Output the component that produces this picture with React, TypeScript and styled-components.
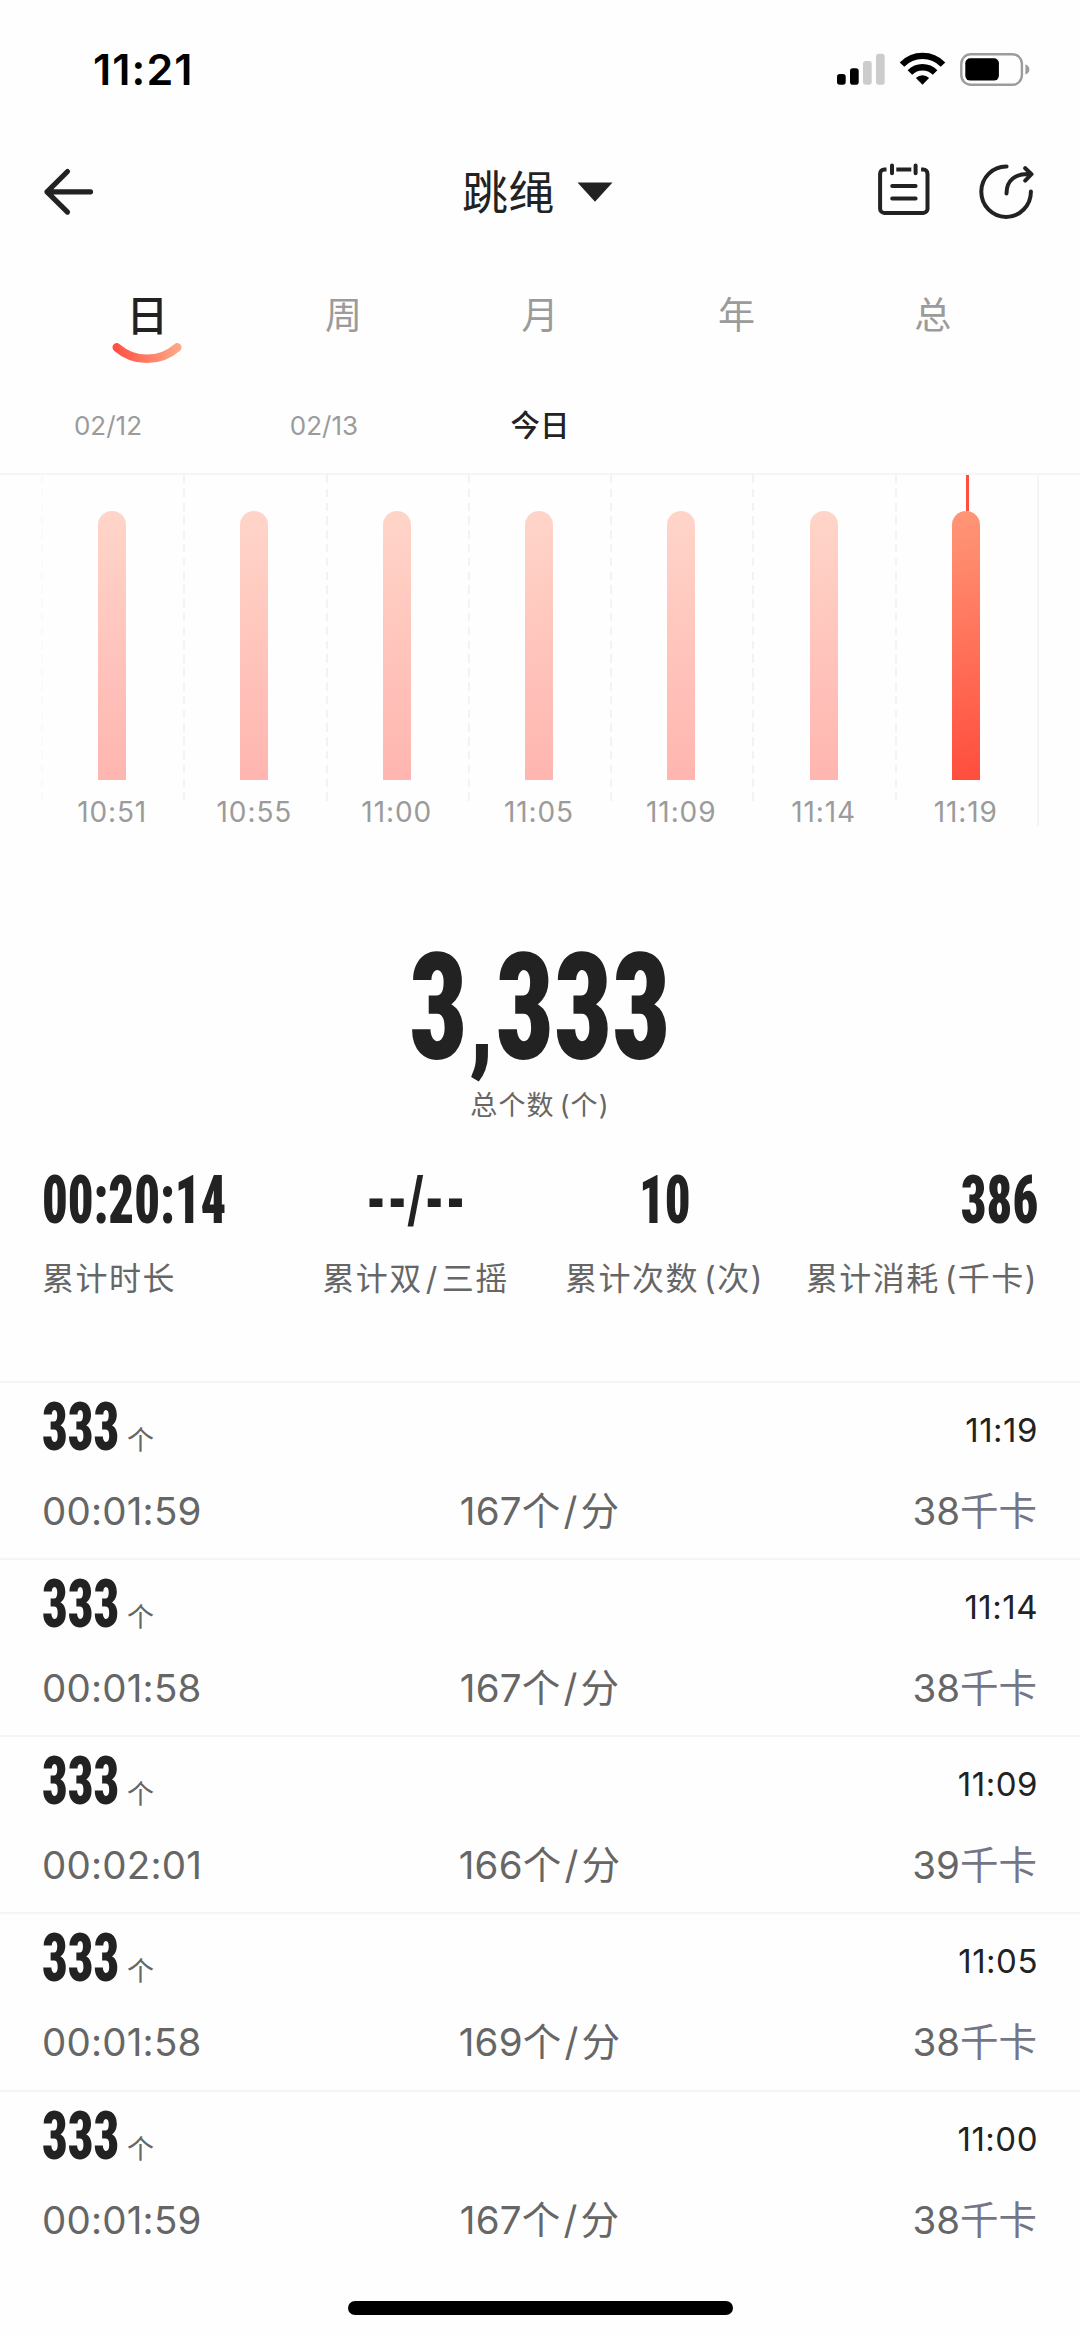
import React from "react";
import styled, { createGlobalStyle } from "styled-components";

const INK = "#222222";
const GRAY = "#666666";
const MUTED = "#9b9b9b";
const LINE = "#f5f5f5";

const Global = createGlobalStyle`
  * { box-sizing: border-box; }
  body { margin: 0; background: #fefefe; }
`;

const Screen = styled.main`
  display: flex;
  flex-direction: column;
  width: 1080px;
  height: 2337px;
  overflow: hidden;
  background: #fefefe;
  color: ${INK};
  font-family: Inter, "Noto Sans CJK SC", sans-serif;
  white-space: nowrap;
`;

/* ---------- status bar ---------- */
const StatusBar = styled.header`
  flex: none;
  display: flex;
  align-items: center;
  justify-content: space-between;
  height: 137px;
  padding: 0 50px 0 93px;
`;
const Clock = styled.span`
  font-size: 43px;
  font-weight: 600;
  line-height: 50px;
  letter-spacing: 1.1px;
  color: #000;
`;
const StatusIcons = styled.svg`
  display: block;
  width: 194px;
  height: 36px;
`;

/* ---------- navigation ---------- */
const NavBar = styled.nav`
  flex: none;
  display: grid;
  grid-template-columns: 1fr auto 1fr;
  align-items: center;
  height: 110px;
  padding: 0 46px 0 41px;
`;
const BackIcon = styled.svg`
  width: 56px;
  height: 52px;
`;
const Title = styled.h1`
  display: flex;
  align-items: center;
  gap: 22px;
  margin: 0;
  font-size: 46px;
  font-weight: 400;
  line-height: 60px;
  letter-spacing: 0.5px;
`;
const Caret = styled.svg`
  width: 36px;
  height: 20px;
`;
const Actions = styled.div`
  display: flex;
  justify-content: flex-end;
  gap: 46px;
`;
const ActionIcon = styled.svg`
  width: 56px;
  height: 58px;
`;

/* ---------- period tabs ---------- */
const Tabs = styled.div`
  flex: none;
  display: flex;
  height: 128px;
  padding: 29px 49px 0;
`;
const Tab = styled.div<{ $active?: boolean }>`
  flex: 1;
  display: flex;
  flex-direction: column;
  align-items: center;
  font-size: ${(p) => (p.$active ? 42 : 37)}px;
  font-weight: ${(p) => (p.$active ? 500 : 400)};
  line-height: 80px;
  color: ${(p) => (p.$active ? INK : MUTED)};
`;
const Smile = styled.svg`
  width: 70px;
  height: 22px;
  margin-top: -14px;
`;

/* ---------- dates ---------- */
const Dates = styled.div`
  flex: none;
  display: flex;
  align-items: center;
  height: 100px;
  padding-top: 4px;
  border-bottom: 2px solid ${LINE};
`;
const DateItem = styled.div<{ $active?: boolean }>`
  width: 216px;
  margin-top: ${(p) => (p.$active ? -2 : 0)}px;
  text-align: center;
  font-size: ${(p) => (p.$active ? 29.5 : 26)}px;
  font-weight: ${(p) => (p.$active ? 500 : 400)};
  line-height: 40px;
  color: ${(p) => (p.$active ? INK : MUTED)};
`;

/* ---------- chart ---------- */
const Chart = styled.section`
  flex: none;
  display: flex;
  height: 351px;
  margin: 0 41px;
  border-right: 2px solid ${LINE};
`;
const Column = styled.div<{ $line: string }>`
  flex: 1;
  display: flex;
  flex-direction: column;
  align-items: center;
  background: repeating-linear-gradient(${(p) => p.$line} 0 8.5px, transparent 8.5px 13.8px) 0 0 / 2px 327px no-repeat;
`;
const Marker = styled.div<{ $on?: boolean }>`
  flex: none;
  width: 3px;
  height: 36px;
  margin-left: 3px;
  background: ${(p) => (p.$on ? "#ff4f40" : "transparent")};
`;
const Bar = styled.div<{ $on?: boolean }>`
  flex: none;
  width: 28px;
  height: 269px;
  border-radius: 14px 14px 0 0;
  background: ${(p) =>
    p.$on
      ? "linear-gradient(170deg, #ff9777, #ff4d3d)"
      : "linear-gradient(170deg, #ffd5c9, #ffb5b0)"};
`;
const BarLabel = styled.div`
  margin-top: 12px;
  font-size: 28px;
  line-height: 40px;
  letter-spacing: 0.9px;
  color: ${MUTED};
`;

/* ---------- summary ---------- */
const Summary = styled.section`
  flex: none;
  display: flex;
  flex-direction: column;
  align-items: center;
  height: 555px;
  padding: 108px 42px 0;
`;
const Figure = styled.div<{ $size: number; $origin?: string }>`
  font-family: "Roboto Condensed", Roboto, sans-serif;
  font-size: ${(p) => p.$size}px;
  font-weight: 900;
  line-height: 1;
  transform: scaleX(0.765);
  transform-origin: ${(p) => p.$origin || "center"};
`;
const Comma = styled.span`
  display: inline-block;
  width: 37px;
  font-size: 0.8em;
  line-height: 1;
  text-align: center;
`;
const Caption = styled.div`
  margin-top: 3px;
  font-size: 27px;
  line-height: 40px;
  letter-spacing: 1.1px;
  color: ${GRAY};
`;
const Stats = styled.div`
  display: flex;
  align-self: stretch;
  margin-top: 45px;
`;
const Stat = styled.div<{ $align: string }>`
  flex: 1 1 0;
  min-width: 0;
  display: flex;
  flex-direction: column;
  align-items: ${(p) => p.$align};
`;
const StatValue = styled.div`
  display: flex;
  align-items: center;
  height: 60px;
`;
const StatLabel = styled.div`
  margin-top: 28px;
  font-size: 32px;
  line-height: 40px;
  letter-spacing: 1.5px;
  color: ${GRAY};
`;
const Slash = styled.span`
  margin: 0 3px;
`;
const Paren = styled.span`
  margin-left: 5px;
`;

/* ---------- records ---------- */
const Record = styled.article`
  flex: none;
  height: 177.15px;
  padding: 15px 43px 0 42px;
  border-top: 2px solid ${LINE};
`;
const RecordTop = styled.div`
  display: flex;
  align-items: center;
  justify-content: space-between;
  height: 60px;
`;
const Count = styled.div`
  display: flex;
  align-items: baseline;
`;
const CountBox = styled.div`
  width: 85px;
`;
const Unit = styled.span`
  font-size: 27px;
  line-height: 30px;
  color: ${GRAY};
`;
const Time = styled.div`
  padding-top: 4px;
  margin-right: -1px;
  font-size: 33px;
  line-height: 40px;
  letter-spacing: 0.5px;
`;
const RecordBottom = styled.div`
  display: grid;
  grid-template-columns: 1fr auto 1fr;
  margin-top: 28px;
  font-size: 38.5px;
  line-height: 50px;
  color: ${GRAY};
`;
const Duration = styled.span`
  letter-spacing: 0.2px;
`;
const Pace = styled.span`
  letter-spacing: 0.2px;
`;
const Energy = styled.span`
  text-align: right;
`;
const EnergyUnit = styled.span`
  color: #757585;
`;

const HomeIndicator = styled.div`
  flex: none;
  width: 385px;
  height: 14px;
  margin: auto auto 22px 348px;
  border-radius: 7px;
  background: #000;
`;

const times = ["10:51", "10:55", "11:00", "11:05", "11:09", "11:14", "11:19"];
const tabs = ["日", "周", "月", "年", "总"];
const stats = [
  { value: "00:20:14", label: "累计时长", align: "flex-start", origin: "left" },
  { value: "--/--", label: <>累计双<Slash>/</Slash>三摇</>, align: "center", origin: "center" },
  { value: "10", label: <>累计次数<Paren>(次)</Paren></>, align: "center", origin: "center" },
  { value: "386", label: <>累计消耗<Paren>(千卡)</Paren></>, align: "flex-end", origin: "right" },
];
const records = [
  { time: "11:19", duration: "00:01:59", pace: 167, kcal: 38 },
  { time: "11:14", duration: "00:01:58", pace: 167, kcal: 38 },
  { time: "11:09", duration: "00:02:01", pace: 166, kcal: 39 },
  { time: "11:05", duration: "00:01:58", pace: 169, kcal: 38 },
  { time: "11:00", duration: "00:01:59", pace: 167, kcal: 38 },
];

export default function App() {
  return (
    <Screen>
      <Global />
      <StatusBar>
        <Clock>11:21</Clock>
        <StatusIcons viewBox="836 50 194 36">
          <rect x="837" y="73" width="8.7" height="10.8" rx="2.8" fill="#000" />
          <rect x="850" y="67.2" width="8.7" height="16.6" rx="2.8" fill="#000" />
          <rect x="863" y="60" width="8.7" height="23.8" rx="2.8" fill="#ccc" />
          <rect x="876" y="52.7" width="8.7" height="31.1" rx="2.8" fill="#ccc" />
          <g fill="none" stroke="#000" strokeWidth="6.4">
            <path d="M902 63.6a28.5 28.5 0 0 1 41 0" />
            <path d="M909.9 71.6a17.6 17.6 0 0 1 25.2 0" />
          </g>
          <path d="M922.5 83.8l-6.6-6.8a9.6 9.6 0 0 1 13.2 0z" />
          <rect x="961.3" y="53.2" width="60.6" height="30.6" rx="9.5" fill="none" stroke="#9c9c9c" strokeWidth="2.4" />
          <rect x="965.3" y="57.2" width="33.6" height="22.4" rx="5" fill="#000" />
          <path d="M1025.4 63.2q4 1.6 4 5.2t-4 5.2z" fill="#9c9c9c" />
        </StatusIcons>
      </StatusBar>

      <NavBar>
        <BackIcon viewBox="41 166 56 52" fill="none" stroke={INK} strokeWidth="5.2" strokeLinecap="round" strokeLinejoin="round">
          <path d="M90.5 191.8H47M67.5 171.5L47 191.8l20.5 20.3" />
        </BackIcon>
        <Title>
          跳绳
          <Caret viewBox="0 0 36 20">
            <path d="M0.5 0.5h35L18 19.8z" fill={INK} />
          </Caret>
        </Title>
        <Actions>
          <ActionIcon viewBox="875 163 56 58" fill="none" stroke={INK} strokeWidth="4" strokeLinecap="round">
            <path d="M885.5 169.5h-2.2a4.2 4.2 0 0 0-4.2 4.2v35a4.2 4.2 0 0 0 4.2 4.2h39a4.2 4.2 0 0 0 4.2-4.2v-35a4.2 4.2 0 0 0-4.2-4.2h-2.2" strokeLinecap="butt" />
            <path d="M895.3 169.5h15" strokeLinecap="butt" />
            <path d="M891 165.6v7.6M914.6 165.6v7.6M891.2 186h23.4M891.2 198.6h23.4" />
          </ActionIcon>
          <ActionIcon viewBox="977 163 56 58" fill="none" stroke={INK} strokeWidth="4" strokeLinecap="round" strokeLinejoin="round">
            <path d="M1005.6 166.5A24.8 25.2 0 1 0 1029.9 191.6" />
            <path d="M1005.5 193.5c0-13 8.5-20.5 24.5-19.3M1024.2 168.2l6.3 6-6.3 6.4" />
          </ActionIcon>
        </Actions>
      </NavBar>

      <Tabs>
        {tabs.map((t, i) => (
          <Tab key={t} $active={i === 0}>
            {t}
            {i === 0 && (
              <Smile viewBox="0 0 70 22">
                <defs>
                  <linearGradient id="smile" x1="0" x2="1" y1="0" y2="0">
                    <stop offset="0" stopColor="#ff5245" />
                    <stop offset="1" stopColor="#ffa685" />
                  </linearGradient>
                </defs>
                <path d="M4.8 5.4Q18 16.8 35 16.8T65.2 5.4" fill="none" stroke="url(#smile)" strokeWidth="8.6" strokeLinecap="round" />
              </Smile>
            )}
          </Tab>
        ))}
      </Tabs>

      <Dates>
        <DateItem>02/12</DateItem>
        <DateItem>02/13</DateItem>
        <DateItem $active>今日</DateItem>
      </Dates>

      <Chart>
        {times.map((t, i) => {
          const on = i === times.length - 1;
          return (
            <Column key={t} $line={i === 0 ? "#fafafa" : "#f3f3f3"}>
              <Marker $on={on} />
              <Bar $on={on} />
              <BarLabel>{t}</BarLabel>
            </Column>
          );
        })}
      </Chart>

      <Summary>
        <Figure $size={149}>
          3<Comma>,</Comma>333
        </Figure>
        <Caption>
          总个数<Paren>(个)</Paren>
        </Caption>
        <Stats>
          {stats.map((s) => (
            <Stat key={s.value} $align={s.align}>
              <StatValue>
                <Figure $size={66} $origin={s.origin}>{s.value}</Figure>
              </StatValue>
              <StatLabel>{s.label}</StatLabel>
            </Stat>
          ))}
        </Stats>
      </Summary>

      {records.map((r) => (
        <Record key={r.time}>
          <RecordTop>
            <Count>
              <CountBox>
                <Figure $size={66} $origin="left">333</Figure>
              </CountBox>
              <Unit>个</Unit>
            </Count>
            <Time>{r.time}</Time>
          </RecordTop>
          <RecordBottom>
            <Duration>{r.duration}</Duration>
            <Pace>
              {r.pace}个<Slash>/</Slash>分
            </Pace>
            <Energy>
              {r.kcal}
              <EnergyUnit>千卡</EnergyUnit>
            </Energy>
          </RecordBottom>
        </Record>
      ))}

      <HomeIndicator />
    </Screen>
  );
}
